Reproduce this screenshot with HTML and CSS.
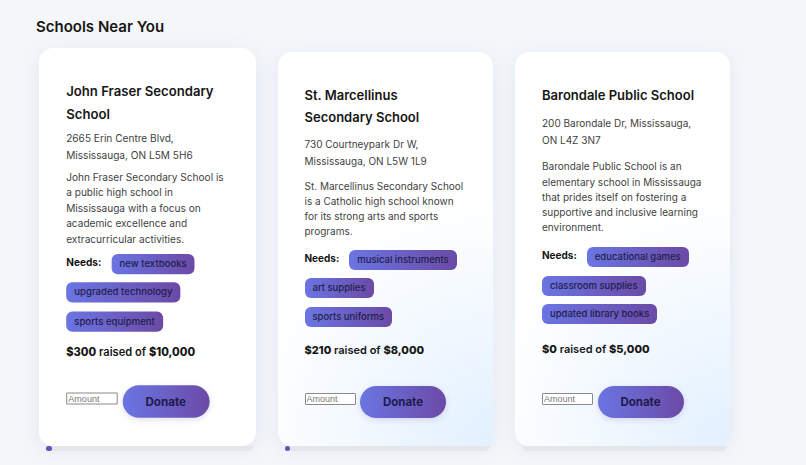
FILE: index.html
```html
<!DOCTYPE html>
<html lang="en">
<head>
<meta charset="utf-8">
<title>Schools Near You</title>
<link rel="stylesheet" href="styles.css">
</head>
<body>
<section class="schools">
  <h2 class="schools-title">Schools Near You</h2>
  <div class="grid">
    <div class="card-wrap is-active">
      <article class="card card-plain">
        <h3 class="name">John Fraser Secondary School</h3>
        <p class="address">2665 Erin Centre Blvd, Mississauga, ON L5M 5H6</p>
        <p class="desc">John Fraser Secondary School is a public high school in Mississauga with a focus on academic excellence and extracurricular activities.</p>
        <div class="needs">
          <strong class="needs-label">Needs:</strong>
          <span class="tag">new textbooks</span>
          <span class="tag">upgraded technology</span>
          <span class="tag">sports equipment</span>
        </div>
        <p class="raised"><b>$300</b> raised of <b>$10,000</b></p>
        <div class="donate-row">
          <input class="amount" type="text" placeholder="Amount"> <button class="donate">Donate</button>
        </div>
      </article>
      <div class="progress"><div class="fill" style="width:3%"></div></div>
    </div>

    <div class="card-wrap">
      <article class="card">
        <h3 class="name">St. Marcellinus Secondary School</h3>
        <p class="address">730 Courtneypark Dr W, Mississauga, ON L5W 1L9</p>
        <p class="desc">St. Marcellinus Secondary School is a Catholic high school known for its strong arts and sports programs.</p>
        <div class="needs">
          <strong class="needs-label">Needs:</strong>
          <span class="tag">musical instruments</span>
          <span class="tag">art supplies</span>
          <span class="tag">sports uniforms</span>
        </div>
        <p class="raised"><b>$210</b> raised of <b>$8,000</b></p>
        <div class="donate-row">
          <input class="amount" type="text" placeholder="Amount"> <button class="donate">Donate</button>
        </div>
      </article>
      <div class="progress"><div class="fill" style="width:2.6%"></div></div>
    </div>

    <div class="card-wrap">
      <article class="card">
        <h3 class="name">Barondale Public School</h3>
        <p class="address">200 Barondale Dr, Mississauga, ON L4Z 3N7</p>
        <p class="desc">Barondale Public School is an elementary school in Mississauga that prides itself on fostering a supportive and inclusive learning environment.</p>
        <div class="needs">
          <strong class="needs-label">Needs:</strong>
          <span class="tag">educational games</span>
          <span class="tag">classroom supplies</span>
          <span class="tag">updated library books</span>
        </div>
        <p class="raised"><b>$0</b> raised of <b>$5,000</b></p>
        <div class="donate-row">
          <input class="amount" type="text" placeholder="Amount"> <button class="donate">Donate</button>
        </div>
      </article>
      <div class="progress"><div class="fill" style="width:0%"></div></div>
    </div>
  </div>
</section>
</body>
</html>
```

FILE: styles.css
```css
* { box-sizing: border-box; }

html, body {
  margin: 0;
  background: #f4f6f9;
}

body {
  font-family: Inter, "Noto Sans", sans-serif;
  color: #1a1a1a;
  width: 806px;
  height: 465px;
  overflow: hidden;
}

.schools {
  padding: 16px 0 0 36px;
}

.schools-title {
  margin: 0 0 14px;
  font-size: 15px;
  line-height: 22px;
  font-weight: 600;
  color: #161616;
}

.grid {
  display: grid;
  grid-template-columns: repeat(3, 215px);
  column-gap: 22.5px;
  padding-left: 4px;
}

.card-wrap {
  display: flex;
  flex-direction: column;
  height: 399px;
}

.card-wrap.is-active {
  transform: translateY(-2px) scale(1.01);
}

.card {
  flex: 1;
  min-height: 0;
  display: flex;
  flex-direction: column;
  justify-content: space-between;
  padding: 32px 26px 28px 27px;
  border-radius: 14px;
  background:
    radial-gradient(circle at 100% 100%, #e2f0ff 0%, rgba(255,255,255,0) 55%),
    #ffffff;
  box-shadow: 0 4px 18px rgba(120, 150, 210, 0.14);
}

.card > * {
  flex-shrink: 0;
}

.card-plain {
  background: #ffffff;
}

.name {
  margin: 0 0 4.5px;
  font-size: 13px;
  line-height: 22px;
  font-weight: 600;
  color: #161616;
}

.address {
  margin: 0 0 5px;
  font-size: 10px;
  line-height: 17px;
  color: #3f3f3f;
}

.desc {
  margin: 0 0 6.5px;
  font-size: 10px;
  line-height: 15.25px;
  color: #3f3f3f;
}

.needs {
  display: flex;
  flex-wrap: wrap;
  align-items: center;
  column-gap: 10px;
  row-gap: 8.5px;
  margin-bottom: 10.5px;
}

.needs-label {
  font-size: 10px;
  font-weight: 700;
  color: #161616;
  align-self: flex-start;
  line-height: 16px;
}

.tag {
  display: inline-block;
  height: 20px;
  line-height: 20px;
  padding: 0 8px;
  border-radius: 6px;
  font-size: 9.5px;
  font-weight: 500;
  color: #22204a;
  background: linear-gradient(90deg, #6a75e3 0%, #6c4aa6 100%);
}

.raised {
  margin: 0 0 22.5px;
  font-size: 11px;
  line-height: 19px;
  font-weight: 600;
  color: #161616;
}

.raised b {
  font-weight: 800;
}

.donate-row {
  height: 32px;
}

.amount {
  width: 51px;
  height: 12px;
  padding: 0 1px;
  border: 1px solid #8a8a8a;
  border-radius: 1px;
  font-family: "Liberation Sans", Arial, sans-serif;
  font-size: 9px;
  color: #333;
  background: #fff;
  vertical-align: 4px;
}

.amount::placeholder {
  color: #7a7a7a;
}

.donate {
  width: 86px;
  height: 32px;
  border: none;
  border-radius: 16px;
  font-family: Inter, "Noto Sans", sans-serif;
  font-size: 11.5px;
  font-weight: 700;
  color: #1e1b4b;
  background: linear-gradient(90deg, #6a75e3 0%, #6c4aa6 100%);
  box-shadow: 0 2px 6px rgba(108, 74, 166, 0.18);
  cursor: pointer;
}

.progress {
  height: 5px;
  margin: 0 3px 0 7px;
  background: #e4e6ea;
  border-radius: 0 0 8px 8px;
}

.fill {
  height: 100%;
  border-radius: 3px;
  background: #5d55b9;
}
```
